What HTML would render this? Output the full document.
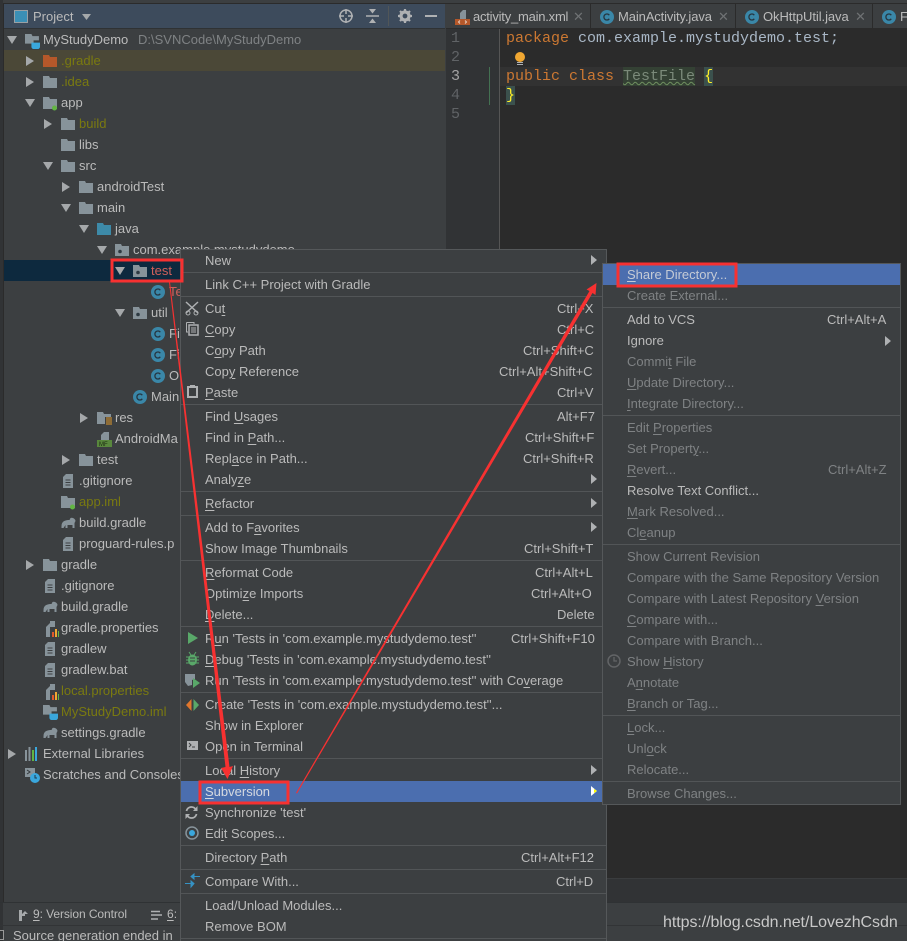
<!DOCTYPE html>
<html><head><meta charset="utf-8"><style>
html,body{margin:0;padding:0;background:#3c3f41}
#r{position:relative;width:907px;height:941px;overflow:hidden;background:#3c3f41;font:13px/21px "Liberation Sans","Noto Sans CJK SC",sans-serif;color:#bbbbbb}
#r div{position:absolute}
.t{white-space:nowrap;height:21px}
.y{color:#7a7a10}
.d{color:#7f8284}
.g{color:#7f8284}
.sp{height:1px;background:#525557}
u{text-decoration-thickness:1px;text-underline-offset:2px}
svg{position:absolute;overflow:visible}
.m{font:15px/19px "Liberation Mono",monospace;white-space:pre;color:#a9b7c6}
.m b{font-weight:normal;color:#cc7832}
.n{font:15px/19px "Liberation Mono",monospace;color:#606366;left:451px}
</style></head><body><div id="r">
<svg width="0" height="0" style="position:absolute"><defs>
<symbol id="f" viewBox="0 0 14 12"><path d="M0 0H6L7 2H14V12H0Z" fill="#87939a"/></symbol>
<symbol id="fo" viewBox="0 0 14 12"><path d="M0 0H6L7 2H14V12H0Z" fill="#b5582a"/></symbol>
<symbol id="fb" viewBox="0 0 14 12"><path d="M0 0H6L7 2H14V12H0Z" fill="#3d8aa8"/></symbol>
<symbol id="fp" viewBox="0 0 14 12"><path d="M0 0H6L7 2H14V12H0Z" fill="#87939a"/><circle cx="5" cy="7.500" r="1.800" fill="#2e3a42"/></symbol>
<symbol id="fm" viewBox="0 0 14 14"><path d="M0 0H6L7 2H14V12H0Z" fill="#87939a"/><circle cx="11.500" cy="11" r="2.500" fill="#62b543"/></symbol>
<symbol id="c" viewBox="0 0 14 14"><circle cx="7" cy="7" r="7" fill="#3a87a8"/><path d="M9.300 5.200A3 3 0 1 0 9.300 8.800" fill="none" stroke="#253540" stroke-width="1.300"/></symbol>
<symbol id="e" viewBox="0 0 14 14"><path d="M0 10C0 5 4 4 8 4L9 2C11 1 14 3 14 5L13 7V12H11V9H6V12H4V9L2 12H0Z" fill="#87939a"/></symbol>
<symbol id="x" viewBox="0 0 10 14"><path d="M0 3L3 0H10V14H0Z" fill="#87939a"/><path d="M2.500 6H7.500M2.500 8.500H7.500M2.500 11H7.500" stroke="#3c3f41" stroke-width="1"/></symbol>
<symbol id="p" viewBox="0 0 14 16"><path d="M1 6L5 2V16H1ZM5 0H10V6H5Z" fill="#87939a"/><path d="M6 9H14V16H6Z" fill="#3c3f41"/><path d="M7 11H9V16H7Z" fill="#e05a2b"/><path d="M10 8H12V16H10Z" fill="#f0a732"/><path d="M13 10H14V16H13Z" fill="#62b543"/></symbol>
<symbol id="ar" viewBox="0 0 8 10"><path d="M0 0L8 5L0 10Z" fill="#a5a8aa"/></symbol>
<symbol id="ad" viewBox="0 0 10 8"><path d="M0 0H10L5 8Z" fill="#a5a8aa"/></symbol>
<symbol id="am" viewBox="0 0 14 14"><path d="M0 0H6L7 2H13V6H8V9H0Z" fill="#87939a"/><path d="M6 8H14V12C14 13 13 14 12 14H8C7 14 6 13 6 12Z" fill="#3aa7dd"/></symbol>
</defs></svg>

<!-- editor -->
<div style="left:446px;top:28px;width:461px;height:850px;background:#2b2b2b"></div>
<div style="left:446px;top:28px;width:53px;height:850px;background:#313335;border-right:1px solid #555"></div>
<div style="left:500px;top:67px;width:407px;height:19px;background:#323232"></div>
<div style="left:489px;top:67px;width:1px;height:38px;background:#447152"></div>
<div class="n" style="top:29px">1</div><div class="n" style="top:48px">2</div><div class="n" style="top:67px;color:#a4a3a3">3</div><div class="n" style="top:86px">4</div><div class="n" style="top:105px">5</div>
<div class="m" style="left:506px;top:29px"><b>package</b> com.example.mystudydemo.test;</div>
<div style="left:623px;top:67px;width:72px;height:19px;background:#344134"></div>
<div style="left:704px;top:67px;width:9px;height:19px;background:#3b514d"></div>
<div style="left:506px;top:86px;width:9px;height:19px;background:#3b514d"></div>
<div class="m" style="left:506px;top:67px"><b>public class</b> <span style="color:#7b8a7a;text-decoration:underline wavy #6f8f5f 1px">TestFile</span> <span style="color:#ffef28">{</span></div>
<div class="m" style="left:506px;top:86px;color:#ffef28">}</div>
<svg style="left:514px;top:52px" width="12" height="14"><circle cx="6" cy="5" r="5" fill="#f0a732"/><path d="M3 10H9V11H3ZM3 12H9V13H3Z" fill="#aeb0b2"/></svg>

<!-- top bars -->
<div style="left:0;top:0;width:907px;height:3px;background:#3c3f41"></div>
<div style="left:0;top:3px;width:907px;height:1px;background:#2b2b2b"></div>
<div style="left:446px;top:4px;width:461px;height:24px;background:#3c3f41;border-bottom:1px solid #2b2b2b"></div>
<div style="left:590px;top:4px;width:1px;height:24px;background:#2b2b2b"></div>
<div style="left:735px;top:4px;width:1px;height:24px;background:#2b2b2b"></div>
<div style="left:872px;top:4px;width:1px;height:24px;background:#2b2b2b"></div>
<svg style="left:455px;top:10px" width="15" height="16"><path d="M5 3L8 0H11V9H5Z" fill="#87939a"/><rect y="9" width="15" height="6" fill="#b5582a"/><path d="M5 10.500L3.500 12L5 13.500M10 10.500L11.500 12L10 13.500" stroke="#e8d0c0" fill="none"/></svg>
<div class="t" style="left:473px;top:6px;color:#bbb;letter-spacing:-.22px">activity_main.xml</div>
<div class="t" style="left:573px;top:6px;color:#6f7274">✕</div>
<svg style="left:600px;top:10px" width="14" height="14"><use href="#c"/></svg>
<div class="t" style="left:618px;top:6px;letter-spacing:-.12px">MainActivity.java</div>
<div class="t" style="left:718px;top:6px;color:#6f7274">✕</div>
<svg style="left:745px;top:10px" width="14" height="14"><use href="#c"/></svg>
<div class="t" style="left:763px;top:6px;letter-spacing:-.07px">OkHttpUtil.java</div>
<div class="t" style="left:855px;top:6px;color:#6f7274">✕</div>
<svg style="left:882px;top:10px" width="14" height="14"><use href="#c"/></svg>
<div class="t" style="left:900px;top:6px">F</div>

<!-- project panel -->
<div style="left:0;top:0;width:3px;height:941px;background:#313335"></div>
<div style="left:3px;top:4px;width:443px;height:899px;background:#3c3f41;border-left:1px solid #2b2b2b;box-sizing:border-box"></div>
<div style="left:4px;top:4px;width:441px;height:24px;background:#3d4b5c;border-bottom:1px solid #2f3234"></div>
<svg style="left:14px;top:10px" width="14" height="13"><rect x=".5" y=".5" width="13" height="12" fill="#3b8fb5" stroke="#9aa0a4"/></svg>
<div class="t" style="left:33px;top:6px">Project</div>
<svg style="left:82px;top:14px" width="9" height="6"><path d="M0 0H9L4.500 6Z" fill="#a5a8aa"/></svg>
<svg style="left:339px;top:9px" width="14" height="14"><circle cx="7" cy="7" r="6" fill="none" stroke="#afb1b3" stroke-width="1.500"/><path d="M7 0V5M7 9V14M0 7H5M9 7H14" stroke="#afb1b3" stroke-width="1.500"/></svg>
<svg style="left:366px;top:9px" width="13" height="14"><path d="M0 7H13" stroke="#afb1b3" stroke-width="1.500"/><path d="M3 0H10L6.500 4.500Z M3 14H10L6.500 9.500Z" fill="#afb1b3"/></svg>
<div style="left:388px;top:6px;width:1px;height:20px;background:#515658"></div>
<svg style="left:398px;top:9px" width="14" height="14"><circle cx="7" cy="7" r="4" fill="none" stroke="#afb1b3" stroke-width="3.200"/><path d="M7 0V3M7 11V14M0 7H3M11 7H14M2 2L4 4M10 10L12 12M12 2L10 4M4 10L2 12" stroke="#afb1b3" stroke-width="2.200"/></svg>
<div style="left:425px;top:15px;width:12px;height:2px;background:#afb1b3"></div>

<div style="left:4px;top:50px;width:441px;height:21px;background:#4b4837"></div>
<div style="left:4px;top:260px;width:176px;height:21px;background:#0d293e"></div>

<svg style="left:7px;top:36px" width="10" height="8"><use href="#ad"/></svg>
<svg style="left:25px;top:34px" width="15" height="15"><use href="#am"/></svg>
<div class="t" style="left:43px;top:29px">MyStudyDemo</div><div class="t d" style="left:138px;top:29px">D:\SVNCode\MyStudyDemo</div>
<svg style="left:26px;top:56px" width="8" height="10"><use href="#ar"/></svg><svg style="left:43px;top:55px" width="14" height="12"><use href="#fo"/></svg><div class="t y" style="left:61px;top:50px">.gradle</div>
<svg style="left:26px;top:77px" width="8" height="10"><use href="#ar"/></svg><svg style="left:43px;top:76px" width="14" height="12"><use href="#f"/></svg><div class="t y" style="left:61px;top:71px">.idea</div>
<svg style="left:25px;top:99px" width="10" height="8"><use href="#ad"/></svg><svg style="left:43px;top:97px" width="14" height="14"><use href="#fm"/></svg><div class="t" style="left:61px;top:92px">app</div>
<svg style="left:44px;top:119px" width="8" height="10"><use href="#ar"/></svg><svg style="left:61px;top:118px" width="14" height="12"><use href="#f"/></svg><div class="t y" style="left:79px;top:113px">build</div>
<svg style="left:61px;top:139px" width="14" height="12"><use href="#f"/></svg><div class="t" style="left:79px;top:134px">libs</div>
<svg style="left:43px;top:162px" width="10" height="8"><use href="#ad"/></svg><svg style="left:61px;top:160px" width="14" height="12"><use href="#f"/></svg><div class="t" style="left:79px;top:155px">src</div>
<svg style="left:62px;top:182px" width="8" height="10"><use href="#ar"/></svg><svg style="left:79px;top:181px" width="14" height="12"><use href="#f"/></svg><div class="t" style="left:97px;top:176px">androidTest</div>
<svg style="left:61px;top:204px" width="10" height="8"><use href="#ad"/></svg><svg style="left:79px;top:202px" width="14" height="12"><use href="#f"/></svg><div class="t" style="left:97px;top:197px">main</div>
<svg style="left:79px;top:225px" width="10" height="8"><use href="#ad"/></svg><svg style="left:97px;top:223px" width="14" height="12"><use href="#fb"/></svg><div class="t" style="left:115px;top:218px">java</div>
<svg style="left:97px;top:246px" width="10" height="8"><use href="#ad"/></svg><svg style="left:115px;top:244px" width="14" height="12"><use href="#fp"/></svg><div class="t" style="left:133px;top:239px">com.example.mystudydemo</div>
<svg style="left:115px;top:267px" width="10" height="8"><use href="#ad"/></svg><svg style="left:133px;top:265px" width="14" height="12"><use href="#fp"/></svg><div class="t" style="left:151px;top:260px;color:#d0605a">test</div>
<svg style="left:151px;top:285px" width="14" height="14"><use href="#c"/></svg><div class="t" style="left:169px;top:281px;color:#d0605a">Te</div>
<svg style="left:115px;top:309px" width="10" height="8"><use href="#ad"/></svg><svg style="left:133px;top:307px" width="14" height="12"><use href="#fp"/></svg><div class="t" style="left:151px;top:302px">util</div>
<svg style="left:151px;top:327px" width="14" height="14"><use href="#c"/></svg><div class="t" style="left:169px;top:323px">Fil</div>
<svg style="left:151px;top:348px" width="14" height="14"><use href="#c"/></svg><div class="t" style="left:169px;top:344px">Fil</div>
<svg style="left:151px;top:369px" width="14" height="14"><use href="#c"/></svg><div class="t" style="left:169px;top:365px">O</div>
<svg style="left:133px;top:390px" width="14" height="14"><use href="#c"/></svg><div class="t" style="left:151px;top:386px">Main</div>
<svg style="left:80px;top:413px" width="8" height="10"><use href="#ar"/></svg><svg style="left:97px;top:412px" width="15" height="13"><path d="M0 0H6L7 2H14V5H8V12H0Z" fill="#87939a"/><path d="M9 6H15M9 8H15M9 10H15M9 12H15" stroke="#e09a2c"/></svg><div class="t" style="left:115px;top:407px">res</div>
<svg style="left:97px;top:432px" width="15" height="15"><path d="M4 3L7 0H12V8H4Z" fill="#87939a"/><rect y="8" width="15" height="7" fill="#59883d"/><text x="2" y="14" font-size="6" font-family="Liberation Sans" fill="#1c2b12">MF</text></svg><div class="t" style="left:115px;top:428px">AndroidMa</div>
<svg style="left:62px;top:455px" width="8" height="10"><use href="#ar"/></svg><svg style="left:79px;top:454px" width="14" height="12"><use href="#f"/></svg><div class="t" style="left:97px;top:449px">test</div>
<svg style="left:63px;top:474px" width="10" height="14"><use href="#x"/></svg><div class="t" style="left:79px;top:470px">.gitignore</div>
<svg style="left:61px;top:496px" width="14" height="14"><use href="#fm"/></svg><div class="t y" style="left:79px;top:491px">app.iml</div>
<svg style="left:61px;top:516px" width="15" height="14"><use href="#e"/></svg><div class="t" style="left:79px;top:512px">build.gradle</div>
<svg style="left:63px;top:537px" width="10" height="14"><use href="#x"/></svg><div class="t" style="left:79px;top:533px">proguard-rules.p</div>
<svg style="left:26px;top:560px" width="8" height="10"><use href="#ar"/></svg><svg style="left:43px;top:559px" width="14" height="12"><use href="#f"/></svg><div class="t" style="left:61px;top:554px">gradle</div>
<svg style="left:45px;top:579px" width="10" height="14"><use href="#x"/></svg><div class="t" style="left:61px;top:575px">.gitignore</div>
<svg style="left:43px;top:600px" width="15" height="14"><use href="#e"/></svg><div class="t" style="left:61px;top:596px">build.gradle</div>
<svg style="left:45px;top:621px" width="14" height="16"><use href="#p"/></svg><div class="t" style="left:61px;top:617px">gradle.properties</div>
<svg style="left:45px;top:642px" width="10" height="14"><use href="#x"/></svg><div class="t" style="left:61px;top:638px">gradlew</div>
<svg style="left:45px;top:663px" width="10" height="14"><use href="#x"/></svg><div class="t" style="left:61px;top:659px">gradlew.bat</div>
<svg style="left:45px;top:684px" width="14" height="16"><use href="#p"/></svg><div class="t y" style="left:61px;top:680px">local.properties</div>
<svg style="left:43px;top:705px" width="15" height="15"><use href="#am"/></svg><div class="t y" style="left:61px;top:701px">MyStudyDemo.iml</div>
<svg style="left:43px;top:726px" width="15" height="14"><use href="#e"/></svg><div class="t" style="left:61px;top:722px">settings.gradle</div>
<svg style="left:8px;top:749px" width="8" height="10"><use href="#ar"/></svg>
<svg style="left:25px;top:747px" width="14" height="14"><path d="M1 3V14M4.500 0V14" stroke="#87939a" stroke-width="2"/><path d="M8 3V14" stroke="#62b543" stroke-width="2"/><path d="M11 0V14" stroke="#3aa7dd" stroke-width="2"/></svg>
<div class="t" style="left:43px;top:743px">External Libraries</div>
<svg style="left:25px;top:768px" width="15" height="15"><rect width="10" height="9" fill="#87939a"/><path d="M2 2L5 4L2 6" stroke="#33373a" fill="none"/><circle cx="10" cy="10" r="5" fill="#3aa7dd"/><path d="M10 7V10H12" stroke="#1d3a4c" fill="none"/></svg>
<div class="t" style="left:43px;top:764px">Scratches and Consoles</div>

<!-- bottom bars -->
<div style="left:0;top:902px;width:907px;height:1px;background:#2f3234"></div>
<div style="left:607px;top:878px;width:300px;height:24px;background:#313335;border-top:1px solid #3a3c3e;box-sizing:border-box"></div>
<div style="left:0;top:925px;width:907px;height:1px;background:#323436"></div>
<svg style="left:18px;top:909px" width="10" height="12"><path d="M1 12V1H4V5L7 2L10 5H7V7H4V12Z" fill="#a5a8aa"/></svg>
<div class="t" style="left:33px;top:904px;font-size:12px;letter-spacing:-.08px"><u>9</u>: Version Control</div>
<svg style="left:151px;top:911px" width="11" height="9"><path d="M0 .5H9M0 4H11M0 8H7" stroke="#afb1b3" stroke-width="1.500"/></svg>
<div class="t" style="left:167px;top:904px;font-size:12px"><u>6</u>:</div>
<div style="left:-4px;top:930px;width:6px;height:8px;border:1px solid #999"></div>
<div class="t" style="left:13px;top:925px">Source generation ended in</div>

<!-- main menu -->
<div style="left:180px;top:249px;width:425px;height:700px;background:#3c3f41;border:1px solid #55585a"></div>
<div class="sp" style="left:181px;top:272px;width:425px"></div>
<div class="sp" style="left:181px;top:296px;width:425px"></div>
<div class="sp" style="left:181px;top:404px;width:425px"></div>
<div class="sp" style="left:181px;top:491px;width:425px"></div>
<div class="sp" style="left:181px;top:515px;width:425px"></div>
<div class="sp" style="left:181px;top:560px;width:425px"></div>
<div class="sp" style="left:181px;top:626px;width:425px"></div>
<div class="sp" style="left:181px;top:692px;width:425px"></div>
<div class="sp" style="left:181px;top:758px;width:425px"></div>
<div class="sp" style="left:181px;top:845px;width:425px"></div>
<div class="sp" style="left:181px;top:869px;width:425px"></div>
<div class="sp" style="left:181px;top:893px;width:425px"></div>
<div class="sp" style="left:181px;top:938px;width:425px"></div>
<div style="left:181px;top:781px;width:421px;height:21px;background:#4b6eaf"></div>

<div class="t" style="left:205px;top:250px">New</div>
<div class="t" style="left:205px;top:274px">Link C++ Project with Gradle</div>
<div class="t" style="left:205px;top:298px">Cu<u>t</u></div>
<div class="t" style="left:205px;top:319px"><u>C</u>opy</div>
<div class="t" style="left:205px;top:340px">C<u>o</u>py Path</div>
<div class="t" style="left:205px;top:361px">Cop<u>y</u> Reference</div>
<div class="t" style="left:205px;top:382px"><u>P</u>aste</div>
<div class="t" style="left:205px;top:406px">Find <u>U</u>sages</div>
<div class="t" style="left:205px;top:427px">Find in <u>P</u>ath...</div>
<div class="t" style="left:205px;top:448px">Repl<u>a</u>ce in Path...</div>
<div class="t" style="left:205px;top:469px">Analy<u>z</u>e</div>
<div class="t" style="left:205px;top:493px"><u>R</u>efactor</div>
<div class="t" style="left:205px;top:517px">Add to F<u>a</u>vorites</div>
<div class="t" style="left:205px;top:538px">Show Image Thumbnails</div>
<div class="t" style="left:205px;top:562px"><u>R</u>eformat Code</div>
<div class="t" style="left:205px;top:583px">Optimi<u>z</u>e Imports</div>
<div class="t" style="left:205px;top:604px"><u>D</u>elete...</div>
<div class="t" style="left:205px;top:628px">R<u>u</u>n 'Tests in 'com.example.mystudydemo.test''</div>
<div class="t" style="left:205px;top:649px"><u>D</u>ebug 'Tests in 'com.example.mystudydemo.test''</div>
<div class="t" style="left:205px;top:670px">Run 'Tests in 'com.example.mystudydemo.test'' with Co<u>v</u>erage</div>
<div class="t" style="left:205px;top:694px">Create 'Tests in 'com.example.mystudydemo.test''...</div>
<div class="t" style="left:205px;top:715px">Show in Explorer</div>
<div class="t" style="left:205px;top:736px">Open in Terminal</div>
<div class="t" style="left:205px;top:760px">Local <u>H</u>istory</div>
<div class="t" style="left:205px;top:781px;color:#d5d9e0"><u>S</u>ubversion</div>
<div class="t" style="left:205px;top:802px">Synchronize 'test'</div>
<div class="t" style="left:205px;top:823px">Ed<u>i</u>t Scopes...</div>
<div class="t" style="left:205px;top:847px">Directory <u>P</u>ath</div>
<div class="t" style="left:205px;top:871px">Compare With...</div>
<div class="t" style="left:205px;top:895px">Load/Unload Modules...</div>
<div class="t" style="left:205px;top:916px">Remove BOM</div>

<div class="t" style="left:557px;top:298px">Ctrl+X</div>
<div class="t" style="left:557px;top:319px">Ctrl+C</div>
<div class="t" style="left:523px;top:340px">Ctrl+Shift+C</div>
<div class="t" style="left:499px;top:361px">Ctrl+Alt+Shift+C</div>
<div class="t" style="left:557px;top:382px">Ctrl+V</div>
<div class="t" style="left:557px;top:406px">Alt+F7</div>
<div class="t" style="left:525px;top:427px">Ctrl+Shift+F</div>
<div class="t" style="left:523px;top:448px">Ctrl+Shift+R</div>
<div class="t" style="left:524px;top:538px">Ctrl+Shift+T</div>
<div class="t" style="left:535px;top:562px">Ctrl+Alt+L</div>
<div class="t" style="left:531px;top:583px">Ctrl+Alt+O</div>
<div class="t" style="left:557px;top:604px">Delete</div>
<div class="t" style="left:511px;top:628px">Ctrl+Shift+F10</div>
<div class="t" style="left:521px;top:847px">Ctrl+Alt+F12</div>
<div class="t" style="left:556px;top:871px">Ctrl+D</div>

<svg style="left:591px;top:255px" width="6" height="10"><path d="M0 0L6 5L0 10Z" fill="#afb1b3"/></svg>
<svg style="left:591px;top:474px" width="6" height="10"><path d="M0 0L6 5L0 10Z" fill="#afb1b3"/></svg>
<svg style="left:591px;top:498px" width="6" height="10"><path d="M0 0L6 5L0 10Z" fill="#afb1b3"/></svg>
<svg style="left:591px;top:522px" width="6" height="10"><path d="M0 0L6 5L0 10Z" fill="#afb1b3"/></svg>
<svg style="left:591px;top:765px" width="6" height="10"><path d="M0 0L6 5L0 10Z" fill="#afb1b3"/></svg>
<svg style="left:591px;top:786px" width="6" height="10"><path d="M0 0L6 5L0 10Z" fill="#fff"/><path d="M3 3L6 5L3 7Z" fill="#ff0"/></svg>

<svg style="left:185px;top:301px" width="14" height="14"><path d="M1 1L13 12M13 1L1 12" stroke="#afb1b3" stroke-width="1.500"/><circle cx="3" cy="12" r="2" fill="none" stroke="#afb1b3"/><circle cx="11" cy="12" r="2" fill="none" stroke="#afb1b3"/></svg>
<svg style="left:186px;top:322px" width="13" height="14"><path d="M.5 .5H8V2M.5 .5V10H2" fill="none" stroke="#afb1b3"/><rect x="3" y="3" width="9" height="10" fill="none" stroke="#afb1b3" stroke-width="1.500"/><path d="M5 6H10M5 8H10M5 10H10" stroke="#afb1b3"/></svg>
<svg style="left:187px;top:385px" width="11" height="13"><rect x="1" y="2" width="9" height="10" fill="none" stroke="#afb1b3" stroke-width="2"/><rect x="3" width="5" height="3" fill="#afb1b3"/></svg>
<svg style="left:188px;top:632px" width="10" height="12"><path d="M0 0L10 6L0 12Z" fill="#59a869"/></svg>
<svg style="left:186px;top:652px" width="13" height="14"><ellipse cx="6.500" cy="8" rx="4.500" ry="5.500" fill="#59a869"/><path d="M0 5H13M0 8H13M0 11H13M3 0L5 3M10 0L8 3" stroke="#59a869"/><path d="M4 6H9M4 9H9" stroke="#3c3f41"/></svg>
<svg style="left:185px;top:673px" width="15" height="15"><path d="M0 1H10V6L7 7V12L3 13L0 9Z" fill="#87939a"/><path d="M8 5L15 10L8 15Z" fill="#59a869"/></svg>
<svg style="left:186px;top:699px" width="13" height="12"><path d="M5.500 0V12L0 6Z" fill="#e0762c"/><path d="M7.500 0V12L13 6Z" fill="#59a869"/></svg>
<svg style="left:187px;top:741px" width="11" height="9"><rect width="11" height="9" fill="#afb1b3"/><path d="M2 2L4 4L2 6M5 6H8" stroke="#3c3f41" fill="none"/></svg>
<svg style="left:185px;top:806px" width="13" height="13"><path d="M1.500 5A5 5 0 0 1 11 4M11.500 8A5 5 0 0 1 2 9" fill="none" stroke="#afb1b3" stroke-width="1.800"/><path d="M12.500 0V5H8ZM.5 13V8H5Z" fill="#afb1b3"/></svg>
<svg style="left:185px;top:826px" width="14" height="14"><circle cx="7" cy="7" r="6" fill="none" stroke="#87939a" stroke-width="1.500"/><circle cx="7" cy="7" r="3" fill="#3aa7dd"/></svg>
<svg style="left:185px;top:874px" width="15" height="14"><path d="M15 2.500H9M9 5V0L6 2.500Z" fill="#3592c4" stroke="#3592c4"/><path d="M0 9.500H6M6 7V13L9 9.500Z" fill="#3592c4" stroke="#3592c4"/></svg>

<!-- sub menu -->
<div style="left:602px;top:263px;width:297px;height:540px;background:#3c3f41;border:1px solid #55585a"></div>
<div style="left:603px;top:264px;width:297px;height:21px;background:#4b6eaf"></div>
<div class="sp" style="left:603px;top:307px;width:297px"></div>
<div class="sp" style="left:603px;top:415px;width:297px"></div>
<div class="sp" style="left:603px;top:544px;width:297px"></div>
<div class="sp" style="left:603px;top:715px;width:297px"></div>
<div class="sp" style="left:603px;top:781px;width:297px"></div>
<div class="t" style="left:627px;top:264px;color:#c5cbd6"><u>S</u>hare Directory...</div>
<div class="t g" style="left:627px;top:285px">Create External...</div>
<div class="t" style="left:627px;top:309px">Add to VCS</div>
<div class="t" style="left:627px;top:330px">Ignore</div>
<div class="t g" style="left:627px;top:351px">Commi<u>t</u> File</div>
<div class="t g" style="left:627px;top:372px"><u>U</u>pdate Directory...</div>
<div class="t g" style="left:627px;top:393px"><u>I</u>ntegrate Directory...</div>
<div class="t g" style="left:627px;top:417px">Edit <u>P</u>roperties</div>
<div class="t g" style="left:627px;top:438px">Set Propert<u>y</u>...</div>
<div class="t g" style="left:627px;top:459px"><u>R</u>evert...</div>
<div class="t" style="left:627px;top:480px">Resolve Text Conflict...</div>
<div class="t g" style="left:627px;top:501px"><u>M</u>ark Resolved...</div>
<div class="t g" style="left:627px;top:522px">Cl<u>e</u>anup</div>
<div class="t g" style="left:627px;top:546px">Show Current Revision</div>
<div class="t g" style="left:627px;top:567px">Compare with the Same Repository Version</div>
<div class="t g" style="left:627px;top:588px">Compare with Latest Repository <u>V</u>ersion</div>
<div class="t g" style="left:627px;top:609px"><u>C</u>ompare with...</div>
<div class="t g" style="left:627px;top:630px">Compare with Branch...</div>
<div class="t g" style="left:627px;top:651px">Show <u>H</u>istory</div>
<div class="t g" style="left:627px;top:672px">A<u>n</u>notate</div>
<div class="t g" style="left:627px;top:693px"><u>B</u>ranch or Tag...</div>
<div class="t g" style="left:627px;top:717px"><u>L</u>ock...</div>
<div class="t g" style="left:627px;top:738px">Unl<u>o</u>ck</div>
<div class="t g" style="left:627px;top:759px">Relocate...</div>
<div class="t g" style="left:627px;top:783px">Browse Changes...</div>
<div class="t" style="left:827px;top:309px">Ctrl+Alt+A</div>
<div class="t g" style="left:828px;top:459px">Ctrl+Alt+Z</div>
<svg style="left:885px;top:336px" width="6" height="10"><path d="M0 0L6 5L0 10Z" fill="#afb1b3"/></svg>
<svg style="left:607px;top:654px" width="14" height="14"><circle cx="7" cy="7" r="6" fill="none" stroke="#626466" stroke-width="1.500"/><path d="M7 3V7H10" fill="none" stroke="#626466" stroke-width="1.300"/></svg>

<div class="t" style="left:663px;top:912px;font:16px/21px 'Liberation Sans',sans-serif;color:#c9c9c9;letter-spacing:-.06px">https://blog.csdn.net/LovezhCsdn</div>

<!-- annotations -->
<svg style="left:0;top:0" width="907" height="941">
<rect x="112" y="260" width="70" height="21" fill="none" stroke="#f73131" stroke-width="3"/>
<rect x="200" y="782" width="88" height="21" fill="none" stroke="#f73131" stroke-width="3"/>
<rect x="618" y="264" width="118" height="22" fill="none" stroke="#f73131" stroke-width="3"/>
<path d="M169 282L170 282L229.500 767L233 766L227.500 779L221 768L225.500 767Z" fill="#f73131"/>
<path d="M296 793L297 793.500L592.500 293L595.500 295L596.500 283L586.500 289.500L589.500 291Z" fill="#f73131"/>
</svg>
</div></body></html>
